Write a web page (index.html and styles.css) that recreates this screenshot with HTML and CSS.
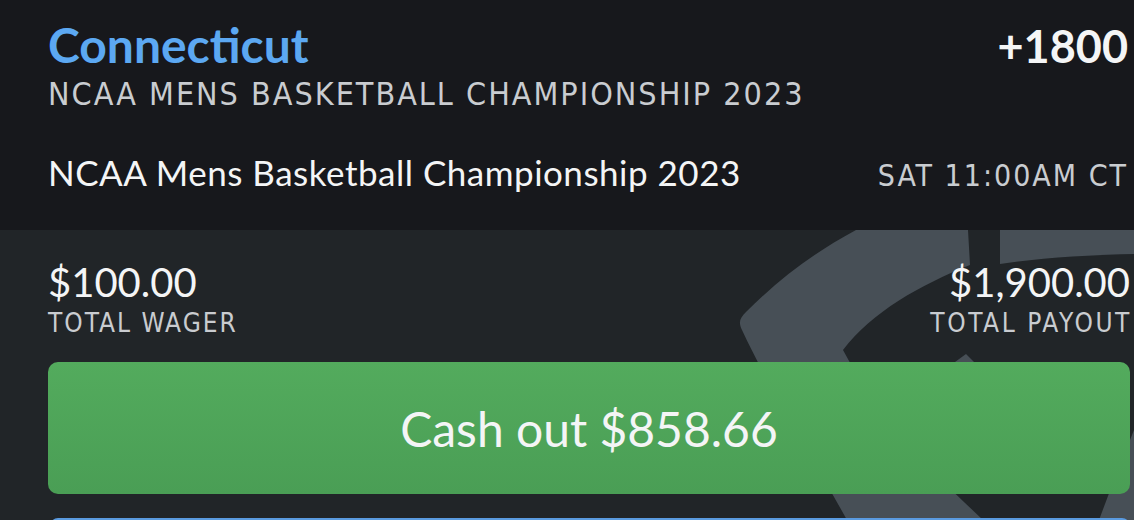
FILE: index.html
```html
<!DOCTYPE html>
<html lang="en">
<head>
    <meta charset="UTF-8">
    <meta name="viewport" content="width=device-width, initial-scale=1.0">
    <title>Bet Slip - Connecticut</title>
    <link rel="stylesheet" href="styles.css">
</head>
<body>
    <div class="bet-card">
        <!-- Selection header -->
        <div class="bet-head">
            <div class="row">
                <span class="team">Connecticut</span>
                <span class="odds">+1800</span>
            </div>
            <div class="market">NCAA MENS BASKETBALL CHAMPIONSHIP 2023</div>
            <div class="row event-row">
                <span class="event">NCAA Mens Basketball Championship 2023</span>
                <span class="start-time">SAT 11:00AM CT</span>
            </div>
        </div>

        <!-- Wager and payout -->
        <div class="bet-body">
            <svg class="watermark" viewBox="0 230 1134 290" aria-hidden="true">
                <path d="M856 230 L968 230 L970 265 C920 285 872 312 843 350 C880 420 930 470 983 520 L847 520 C808 450 770 390 742 330 C738 322 740 318 746 312 C780 278 815 252 856 230 Z"/>
                <path d="M1000 230 L1134 230 L1134 254 C1085 255 1040 258 1000 264 Z"/>
                <path d="M955 362 L966 354 L974 362 Z"/>
                <path d="M1134 430 L1134 520 L1099 520 L1114 480 Z"/>
            </svg>
            <div class="row totals">
                <div class="total">
                    <div class="amount">$100.00</div>
                    <div class="label">TOTAL WAGER</div>
                </div>
                <div class="total total-right">
                    <div class="amount">$1,900.00</div>
                    <div class="label">TOTAL PAYOUT</div>
                </div>
            </div>
            <button class="cashout">Cash out $858.66</button>
            <div class="next-button"></div>
        </div>
    </div>
</body>
</html>
```

FILE: styles.css
```css
/* Page */
body {
    margin: 0;
    padding: 0;
    background-color: #212528;
    font-family: Lato, "Open Sans", sans-serif;
    overflow: hidden;
}

.bet-card {
    width: 1134px;
    height: 520px;
    overflow: hidden;
}

.row {
    display: flex;
    justify-content: space-between;
    align-items: baseline;
}

/* Header */
.bet-head {
    height: 230px;
    box-sizing: border-box;
    background-color: #17181c;
    padding: 20px 6px 0 48px;
}

.team {
    color: #5ca8f2;
    font-size: 48px;
    font-weight: 700;
    line-height: 50px;
}

.odds {
    color: #f4f5f6;
    font-size: 45px;
    font-weight: 700;
    line-height: 50px;
}

.market,
.start-time,
.label {
    font-family: "Liberation Sans Narrow", "DejaVu Sans Condensed", sans-serif;
    color: #c9ccd0;
    letter-spacing: 2px;
}

.market {
    margin-top: 5px;
    font-size: 32px;
    line-height: 36px;
}

.event-row {
    margin-top: 40px;
}

.event {
    color: #f4f5f6;
    font-size: 35px;
    letter-spacing: 0.5px;
    line-height: 40px;
}

.start-time {
    font-size: 30px;
    line-height: 40px;
}

/* Body */
.bet-body {
    position: relative;
    padding: 30px 4px 0 48px;
}

.watermark {
    position: absolute;
    top: 0;
    left: 0;
    width: 1134px;
    height: 290px;
    fill: #474f56;
}

.totals {
    position: relative;
}

.total-right {
    text-align: right;
}

.amount {
    color: #f4f5f6;
    font-size: 40px;
    line-height: 44px;
}

.label {
    margin-top: 4px;
    font-size: 26px;
    line-height: 30px;
}

.total-right .label {
    margin-right: -2px;
    letter-spacing: 2.6px;
}

.cashout {
    position: relative;
    display: block;
    width: 100%;
    height: 132px;
    margin-top: 24px;
    border: none;
    border-radius: 10px;
    background: linear-gradient(#53ab5d, #4a9e55);
    color: #f4f5f6;
    font-family: Lato, "Open Sans", sans-serif;
    font-size: 48px;
    cursor: pointer;
}

.next-button {
    position: relative;
    height: 40px;
    margin: 24px 0 0 2px;
    border-radius: 8px;
    background-color: #5a9be0;
}
```
